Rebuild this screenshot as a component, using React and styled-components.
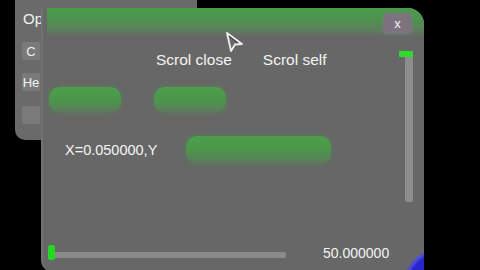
import React from "react"
import styled, { createGlobalStyle } from "styled-components"

const Global = createGlobalStyle`
  html, body { margin: 0; padding: 0; background: #000; }
  body { width: 480px; height: 270px; overflow: hidden; font-family: "Liberation Sans", Arial, sans-serif; }
`

const Desktop = styled.div`
  position: relative;
  width: 480px;
  height: 270px;
  background: #000;
  overflow: hidden;
`

const BackWindow = styled.div`
  position: absolute;
  left: 15px;
  top: -12px;
  width: 182px;
  height: 152px;
  background: #6a6a6a;
  border-radius: 10px;
  display: flex;
  flex-direction: column;
  align-items: flex-start;
  gap: 9px;
  padding: 21px 0 0 7px;
  box-sizing: border-box;
`

const BackItem = styled.div`
  width: 18px;
  height: 18px;
  display: flex;
  align-items: center;
  padding-left: ${p => (p.$boxed ? "0" : "1px")};
  justify-content: ${p => (p.$boxed ? "center" : "flex-start")};
  background: ${p => (p.$boxed ? "#7a7a7a" : "transparent")};
  color: #f2f2f2;
  font-size: ${p => (p.$big ? "15px" : "13px")};
  white-space: nowrap;
  border-radius: 2px;
  margin-bottom: ${p => p.$gap || 0}px;
`

const Window = styled.div`
  position: absolute;
  left: 41px;
  top: 8px;
  width: 383px;
  height: 264px;
  background: #676767;
  border-radius: 4px 16px 0 12px;
  border-left: 2px solid #727272;
  box-sizing: border-box;
  overflow: hidden;
  display: flex;
  flex-direction: column;
`

const TitleBar = styled.div`
  height: 29px;
  margin-left: 4px;
  background: linear-gradient(to bottom, #4a9c4a 0%, #4e944e 35%, #5d7f5d 75%, #676767 100%);
  display: flex;
  justify-content: flex-end;
  align-items: flex-start;
  padding: 6px 13px 0 0;
  box-sizing: border-box;
`

const CloseButton = styled.div`
  width: 27px;
  height: 19px;
  background: #7c737f;
  border-radius: 3px;
  color: #f4f4f4;
  font-size: 13px;
  display: flex;
  align-items: center;
  justify-content: center;
  box-shadow: 0 0 3px 1px #7a7a80;
`

const Body = styled.div`
  flex: 1;
  display: grid;
  grid-template-columns: 1fr 24px;
  padding-right: 16px;
`

const Main = styled.div`
  display: flex;
  flex-direction: column;
`

const LabelRow = styled.div`
  display: flex;
  gap: 31px;
  padding: 15px 0 0 113px;
  height: 16px;
  align-items: center;
`

const Label = styled.span`
  color: #f4f4f4;
  font-size: 15.5px;
  white-space: nowrap;
`

const ButtonRow = styled.div`
  display: flex;
  gap: ${p => p.$gap}px;
  align-items: center;
  padding-left: ${p => p.$pad}px;
  margin-top: ${p => p.$top}px;
`

const GreenButton = styled.div`
  width: ${p => p.$w}px;
  height: ${p => p.$h}px;
  border-radius: 11px;
  background: linear-gradient(to bottom, #4c9f4c 0%, #4b974b 45%, #568656 80%, #627062 100%);
  box-shadow: 0 0 4px 2px rgba(80, 140, 80, 0.35);
`

const Readout = styled.span`
  color: #f4f4f4;
  font-size: 14.5px;
  width: 121px;
  white-space: nowrap;
`

const BottomRow = styled.div`
  margin-top: auto;
  display: flex;
  align-items: center;
  padding: 0 0 11px 5px;
`

const HSlider = styled.div`
  position: relative;
  width: 238px;
  height: 16px;
  display: flex;
  align-items: center;
`

const HTrack = styled.div`
  width: 100%;
  height: 6px;
  margin-top: 4px;
  background: #8a8a8a;
  border-radius: 2px;
`

const HThumb = styled.div`
  position: absolute;
  left: 0;
  top: 0;
  width: 7px;
  height: 15px;
  background: #22d822;
  border-radius: 2px;
`

const Value = styled.span`
  margin-left: 37px;
  color: #f4f4f4;
  font-size: 14px;
`

const VSlider = styled.div`
  position: relative;
  display: flex;
  justify-content: flex-end;
  padding: 15px 0 0 0;
`

const VTrack = styled.div`
  width: 8px;
  height: 150px;
  background: #8c8c8c;
  border-radius: 2px;
`

const VThumb = styled.div`
  position: absolute;
  right: 0;
  top: 14px;
  width: 14px;
  height: 6px;
  background: #2bdc2b;
  border-radius: 1px;
`

const Grip = styled.div`
  position: absolute;
  right: -53px;
  bottom: -50px;
  width: 73px;
  height: 73px;
  border-radius: 50%;
  background: #2626c8;
  box-shadow: inset 2px 2px 3px #5656e0;
`

const Cursor = styled.svg`
  position: absolute;
  left: 225px;
  top: 31px;
`

export default function App() {
  return (
    <Desktop>
      <Global />
      <BackWindow>
        <BackItem $big $gap={6}>Opt</BackItem>
        <BackItem $boxed $gap={4}>C</BackItem>
        <BackItem $boxed $gap={6}>He</BackItem>
        <BackItem $boxed></BackItem>
      </BackWindow>
      <Window>
        <TitleBar>
          <CloseButton>x</CloseButton>
        </TitleBar>
        <Body>
          <Main>
            <LabelRow>
              <Label>Scrol close</Label>
              <Label>Scrol self</Label>
            </LabelRow>
            <ButtonRow $pad={6} $gap={33} $top={19}>
              <GreenButton $w={72} $h={26} />
              <GreenButton $w={72} $h={26} />
            </ButtonRow>
            <ButtonRow $pad={22} $gap={0} $top={23}>
              <Readout>X=0.050000,Y</Readout>
              <GreenButton $w={145} $h={28} />
            </ButtonRow>
            <BottomRow>
              <HSlider>
                <HTrack />
                <HThumb />
              </HSlider>
              <Value>50.000000</Value>
            </BottomRow>
          </Main>
          <VSlider>
            <VTrack />
            <VThumb />
          </VSlider>
        </Body>
        <Grip />
      </Window>
      <Cursor width="20" height="22" viewBox="0 0 20 22">
        <path d="M2 2 L17 13 L10 13.5 L6 20 Z" fill="#6a6a6a" stroke="#f0f0f0" strokeWidth="1.8" strokeLinejoin="round" />
        <path d="M4 5 L13 12" stroke="#222" strokeWidth="0.8" />
      </Cursor>
    </Desktop>
  )
}
